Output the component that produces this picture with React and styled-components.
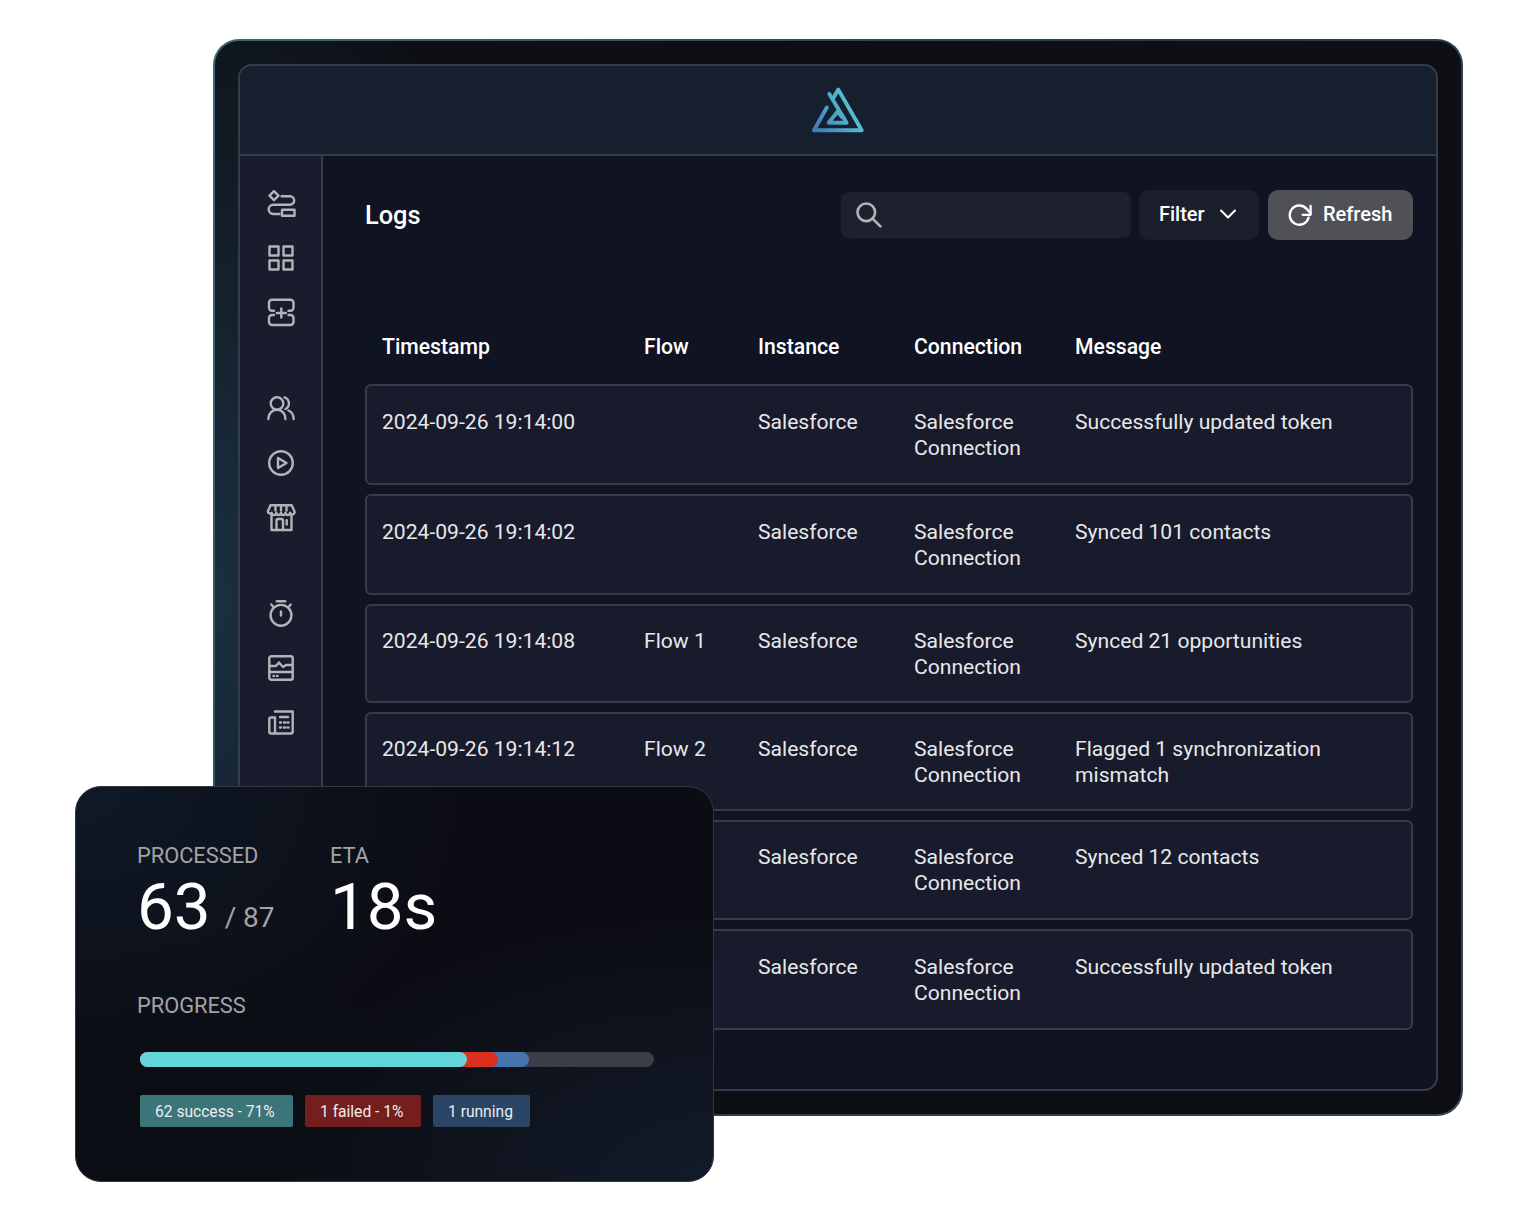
import React from "react";
import styled, { createGlobalStyle } from "styled-components";
import { ChevronDown } from "lucide-react";

const GlobalStyle = createGlobalStyle`
  html, body {
    margin: 0;
    padding: 0;
    background: #fff;
    font-family: Roboto, "Liberation Sans", sans-serif;
  }
  * { box-sizing: border-box; }
`;

const rows = [
  { time: "2024-09-26 19:14:00", flow: "", message: "Successfully updated token", height: 101, pad: 23 },
  { time: "2024-09-26 19:14:02", flow: "", message: "Synced 101 contacts", height: 101, pad: 23 },
  { time: "2024-09-26 19:14:08", flow: "Flow 1", message: "Synced 21 opportunities", height: 99, pad: 22 },
  { time: "2024-09-26 19:14:12", flow: "Flow 2", message: "Flagged 1 synchronization mismatch", height: 99, pad: 22 },
  { time: "2024-09-26 19:14:16", flow: "Flow 2", message: "Synced 12 contacts", height: 100, pad: 22 },
  { time: "2024-09-26 19:14:20", flow: "Flow 2", message: "Successfully updated token", height: 101, pad: 23 },
];

const Logo = () => (
  <svg width="54" height="46" viewBox="0 0 54 46" fill="none">
    <defs>
      <linearGradient id="logoGrad" x1="0" y1="46" x2="54" y2="14" gradientUnits="userSpaceOnUse">
        <stop offset="0" stopColor="#3f74b4" />
        <stop offset="1" stopColor="#5bd6da" />
      </linearGradient>
    </defs>
    <g stroke="url(#logoGrad)" strokeWidth="3.9" strokeLinejoin="round" strokeLinecap="round">
      <path d="M15.8 20.5 L3 43.3 H50.7 L27.3 2.6 L22.6 10.5" />
      <path d="M18.3 7 L35.6 35.8 H17.6 L26.7 24.5 L31 30" />
    </g>
  </svg>
);

const Stroke = ({ children }) => (
  <svg viewBox="0 0 28 28" fill="none" stroke="currentColor" strokeWidth="2.4" strokeLinejoin="round" strokeLinecap="round">
    {children}
  </svg>
);

const FlowIcon = () => (
  <Stroke>
    <path d="M7 2.2 L11.5 6.7 L7 11.2 L2.5 6.7 Z" />
    <path d="M14.5 7.3 H23 a4.2 4.2 0 0 1 0 8.4 H6.3 a4.6 4.6 0 0 0 0 9.3 H12.5" />
    <rect x="15" y="20.7" width="12.5" height="6" />
  </Stroke>
);

const GridIcon = () => (
  <Stroke>
    <path d="M2.5 2.5 H11.5 V11.5 H2.5 Z M16.5 2.5 H25.5 V11.5 H16.5 Z M2.5 16.5 H11.5 V25.5 H2.5 Z M16.5 16.5 H25.5 V25.5 H16.5 Z" />
  </Stroke>
);

const AddIcon = () => (
  <Stroke>
    <path d="M7 12.8 H5 a3 3 0 0 1 -3 -3 V4.7 a3 3 0 0 1 3 -3 H23.5 a3 3 0 0 1 3 3 V9.8 a3 3 0 0 1 -3 3 H21.5" />
    <path d="M7 17 H5 a3 3 0 0 0 -3 3 V24 a3 3 0 0 0 3 3 H23.5 a3 3 0 0 0 3 -3 V20 a3 3 0 0 0 -3 -3 H21.5" />
    <path d="M14.3 10.5 V19.5 M9.8 15 H18.8" />
  </Stroke>
);

const UsersIcon = () => (
  <Stroke>
    <circle cx="10" cy="9.5" r="6.3" />
    <path d="M1.4 25 C1.4 19.5 5 15.8 10 15.8 S18.4 19.5 18.4 25" />
    <path d="M17.5 3.4 A6.3 6.3 0 0 1 18.5 15" />
    <path d="M21.5 16.5 C24.8 18 26.6 21 26.6 25" />
  </Stroke>
);

const PlayIcon = () => (
  <Stroke>
    <circle cx="14" cy="14" r="11.8" />
    <path d="M11 9 L19.5 14 L11 19 Z" />
  </Stroke>
);

const StoreIcon = () => (
  <Stroke>
    <path d="M3.5 2.3 H24.7 L27.5 8.5 a2.2 2.2 0 0 1 -4.4 1.2 a2.3 2.3 0 0 1 -4.6 0 a2.3 2.3 0 0 1 -4.6 0 a2.3 2.3 0 0 1 -4.6 0 a2.3 2.3 0 0 1 -4.6 0 a2.2 2.2 0 0 1 -3.9 -1.2 Z" />
    <path d="M8.5 4 V7.5 M14 4 V7.5 M19.5 4 V7.5" />
    <path d="M4.5 12 V27 H24.5 V12" />
    <path d="M9.5 27 V17.5 a1.5 1.5 0 0 1 1.5 -1.5 H14.5 a1.5 1.5 0 0 1 1.5 1.5 V27" />
    <path d="M19.7 17.3 V21.5" />
  </Stroke>
);

const TimerIcon = () => (
  <Stroke>
    <circle cx="14" cy="16.3" r="10.4" />
    <path d="M9.8 2.2 H18.2" />
    <path d="M4.3 5.5 L6.5 8 M23.7 5.5 L21.5 8" />
    <path d="M14 12.5 V16.5" />
  </Stroke>
);

const MonitorIcon = () => (
  <Stroke>
    <rect x="2.3" y="2.3" width="23.4" height="23.4" rx="2" />
    <path d="M2.3 12 H9 L12 8.5 L16 13 L19 11 H25.7" />
    <path d="M2.3 18 H25.7" />
    <path d="M6.5 21.9 H7 M10 21.9 H10.5" />
  </Stroke>
);

const PaperIcon = () => (
  <Stroke>
    <path d="M8 3.5 H25.7 V23.5 a2 2 0 0 1 -2 2 H4.3 a2 2 0 0 1 -2 -2 V11 a1.5 1.5 0 0 1 1.5 -1.5 H8 V25" />
    <path d="M13 9 H21" />
    <path d="M13 14.5 H14 M17 14.5 H18 M20.5 14.5 H21.5 M13 19.5 H14 M17 19.5 H18 M20.5 19.5 H21.5" />
  </Stroke>
);

const SearchIcon = () => (
  <svg width="26" height="26" viewBox="0 0 26 26" fill="none" stroke="currentColor" strokeWidth="2.6" strokeLinecap="round">
    <circle cx="10.3" cy="10.3" r="8.8" />
    <path d="M16.8 16.8 L24.4 24.4" />
  </svg>
);

const RefreshIcon = () => (
  <svg width="26" height="26" viewBox="0 0 26 26" fill="none" stroke="currentColor" strokeWidth="2.3" strokeLinecap="round" strokeLinejoin="round">
    <path d="M22.6 15.6 A9.6 9.6 0 1 1 20.4 6.6 L24.4 11" />
    <path d="M24.6 4 V12.8 H16.6" />
  </svg>
);

const navGroups = [
  [FlowIcon, GridIcon, AddIcon],
  [UsersIcon, PlayIcon, StoreIcon],
  [TimerIcon, MonitorIcon, PaperIcon],
];

const App = () => {
  return (
    <Page>
      <GlobalStyle />
      <Frame>
        <Window>
          <TopBar>
            <Logo />
          </TopBar>
          <Body>
            <Sidebar>
              {navGroups.map((group, i) => (
                <NavGroup key={i}>
                  {group.map((Icon, j) => (
                    <NavIcon key={j}>
                      <Icon />
                    </NavIcon>
                  ))}
                </NavGroup>
              ))}
            </Sidebar>
            <Main>
              <Toolbar>
                <Title>Logs</Title>
                <SearchBox>
                  <SearchIcon />
                </SearchBox>
                <FilterButton>
                  Filter
                  <ChevronDown size={28} strokeWidth={1.8} />
                </FilterButton>
                <RefreshButton>
                  <RefreshIcon />
                  Refresh
                </RefreshButton>
              </Toolbar>
              <HeadRow>
                <span>Timestamp</span>
                <span>Flow</span>
                <span>Instance</span>
                <span>Connection</span>
                <span>Message</span>
              </HeadRow>
              <RowList>
                {rows.map((row) => (
                  <LogRow key={row.time} $height={row.height} $pad={row.pad}>
                    <span>{row.time}</span>
                    <span>{row.flow}</span>
                    <span>Salesforce</span>
                    <span>Salesforce Connection</span>
                    <span>{row.message}</span>
                  </LogRow>
                ))}
              </RowList>
            </Main>
          </Body>
        </Window>
      </Frame>
      <ProgressCard>
        <Stats>
          <Stat $width={193}>
            <StatLabel>PROCESSED</StatLabel>
            <StatValue>
              63<StatTotal>/ 87</StatTotal>
            </StatValue>
          </Stat>
          <Stat>
            <StatLabel>ETA</StatLabel>
            <StatValue>18s</StatValue>
          </Stat>
        </Stats>
        <ProgressLabel>PROGRESS</ProgressLabel>
        <Bar>
          <BarFill $color="#4674ae" $width={389} />
          <BarFill $color="#dc2f20" $width={358} />
          <BarFill $color="#62d6da" $width={327} />
        </Bar>
        <Badges>
          <Badge $bg="#3b7479" $width={153}>62 success - 71%</Badge>
          <Badge $bg="#741e1e" $width={116}>1 failed - 1%</Badge>
          <Badge $bg="#2a4565" $width={97}>1 running</Badge>
        </Badges>
      </ProgressCard>
    </Page>
  );
};

export default App;

const Page = styled.div`
  position: relative;
  width: 1536px;
  height: 1222px;
  padding: 39px 0 0 213px;
  overflow: hidden;
  background: #fff;
`;

const Frame = styled.div`
  width: 1250px;
  height: 1077px;
  padding: 23px;
  border: 2px solid transparent;
  border-radius: 26px;
  background:
    radial-gradient(ellipse 320px 700px at 0% 52%, #1a2f40 0%, rgba(26, 47, 64, 0) 100%) padding-box,
    linear-gradient(#0d0f14, #0d0f14) padding-box,
    linear-gradient(120deg, #3d6a72 0%, #2a3d46 50%, #33474f 100%) border-box;
`;

const Window = styled.div`
  height: 100%;
  display: flex;
  flex-direction: column;
  border: 2px solid #383c48;
  border-radius: 14px;
  background: #0f1322;
  overflow: hidden;
`;

const TopBar = styled.div`
  height: 90px;
  flex: none;
  display: flex;
  align-items: center;
  justify-content: center;
  background: #151f2e;
  border-bottom: 2px solid #383c48;
`;

const Body = styled.div`
  flex: 1;
  display: flex;
  min-height: 0;
`;

const Sidebar = styled.div`
  width: 83px;
  flex: none;
  display: flex;
  flex-direction: column;
  align-items: center;
  gap: 68px;
  padding-top: 33px;
  background: #181c2c;
  border-right: 2px solid #383c48;
`;

const NavGroup = styled.div`
  display: flex;
  flex-direction: column;
  gap: 26.5px;
`;

const NavIcon = styled.div`
  width: 28px;
  height: 28px;
  color: #b3b4b9;

  svg {
    display: block;
    width: 28px;
    height: 28px;
    overflow: visible;
  }
`;

const Main = styled.div`
  flex: 1;
  min-width: 0;
  padding: 34px 23px 0 42px;
`;

const Toolbar = styled.div`
  display: flex;
  align-items: center;
  height: 50px;
`;

const Title = styled.div`
  margin-right: auto;
  font-size: 25.4px;
  font-weight: 500;
  color: #fff;
`;

const SearchBox = styled.div`
  width: 290px;
  height: 46px;
  display: flex;
  align-items: center;
  padding-left: 15px;
  margin-right: 8px;
  border-radius: 8px;
  background: #1d202d;
  color: #b3b4b9;
`;

const FilterButton = styled.div`
  width: 120px;
  height: 50px;
  display: flex;
  align-items: center;
  gap: 9px;
  padding: 0 0 2px 20px;
  margin-right: 9px;
  border-radius: 10px;
  background: #1b1e2b;
  color: #fff;
  font-size: 20px;
  font-weight: 500;
`;

const RefreshButton = styled.div`
  width: 145px;
  height: 50px;
  display: flex;
  align-items: center;
  gap: 11px;
  padding: 0 0 2px 18px;
  border-radius: 10px;
  background: #505157;
  color: #fff;
  font-size: 20px;
  font-weight: 500;

  svg {
    margin-top: 2px;
  }
`;

const gridColumns = "262px 114px 156px 161px 1fr";

const HeadRow = styled.div`
  display: grid;
  grid-template-columns: ${gridColumns};
  align-items: center;
  height: 32px;
  margin-top: 90px;
  padding: 0 17px;
  color: #fff;
  font-size: 21.2px;
  font-weight: 500;
`;

const RowList = styled.div`
  display: flex;
  flex-direction: column;
  gap: 9px;
  margin-top: 22px;
`;

const LogRow = styled.div`
  display: grid;
  grid-template-columns: ${gridColumns};
  align-content: start;
  height: ${({ $height }) => $height}px;
  padding: ${({ $pad }) => $pad}px 15px 0;
  border: 2px solid #383b47;
  border-radius: 6px;
  background: #181b2b;
  color: #e8e8ea;
  font-size: 21.1px;
  line-height: 26px;

  span:nth-child(4) {
    max-width: 120px;
  }

  span:nth-child(5) {
    max-width: 300px;
  }
`;

const ProgressCard = styled.div`
  position: absolute;
  left: 75px;
  top: 786px;
  width: 639px;
  height: 396px;
  padding: 56px 60px 0 61px;
  border: 1px solid #33363f;
  border-radius: 26px;
  background:
    radial-gradient(ellipse 420px 260px at 0% 100%, rgba(10, 14, 20, 0.7), rgba(10, 14, 20, 0) 100%),
    radial-gradient(ellipse 460px 260px at 100% 100%, #121b2a 0%, rgba(18, 27, 42, 0) 100%),
    radial-gradient(ellipse 380px 300px at 0% 0%, #0f1927 0%, rgba(15, 25, 39, 0) 100%),
    #0c0d14;
`;

const Stats = styled.div`
  display: flex;
`;

const Stat = styled.div`
  width: ${({ $width }) => ($width ? `${$width}px` : "auto")};
`;

const StatLabel = styled.div`
  color: #a2a3a7;
  font-size: 21.8px;
  line-height: 26px;
`;

const StatValue = styled.div`
  margin-top: 2px;
  color: #fff;
  font-size: 65.5px;
  line-height: 72px;
`;

const StatTotal = styled.span`
  margin-left: 14px;
  color: #a2a3a7;
  font-size: 28px;
  vertical-align: 2px;
`;

const ProgressLabel = styled.div`
  margin-top: 39px;
  color: #a2a3a7;
  font-size: 21.8px;
  line-height: 26px;
`;

const Bar = styled.div`
  position: relative;
  height: 15px;
  margin: 33px 0 0 3px;
  width: 514px;
  border-radius: 8px;
  background: #3c3d46;
`;

const BarFill = styled.div`
  position: absolute;
  top: 0;
  left: 0;
  height: 15px;
  width: ${({ $width }) => $width}px;
  border-radius: 8px;
  background: ${({ $color }) => $color};
`;

const Badges = styled.div`
  display: flex;
  gap: 12px;
  margin: 28px 0 0 3px;
`;

const Badge = styled.div`
  width: ${({ $width }) => $width}px;
  height: 32px;
  display: flex;
  align-items: center;
  padding: 2px 0 0 15px;
  border-radius: 2px;
  background: ${({ $bg }) => $bg};
  color: #eceeef;
  font-size: 15.6px;
  white-space: nowrap;
`;
